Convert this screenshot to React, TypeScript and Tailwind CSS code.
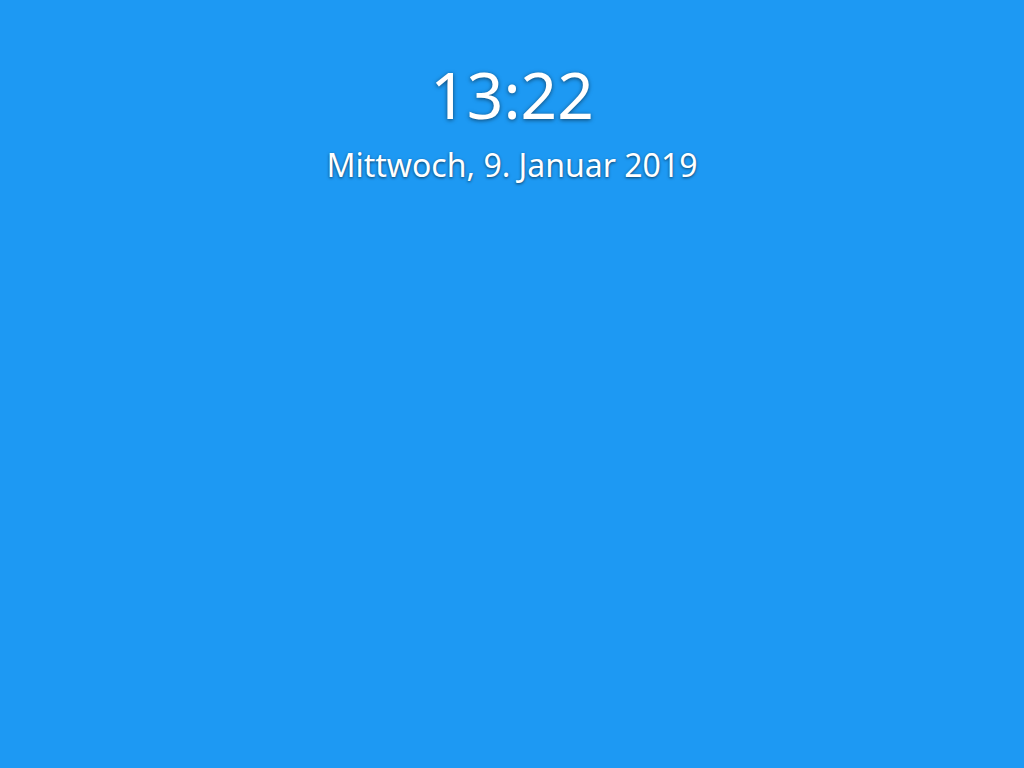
export default function App() {
  return (
    <div className="flex h-[768px] w-[1024px] flex-col items-center bg-[#1d99f3] font-['Noto_Sans','Open_Sans',sans-serif] text-white">
      <div className="mt-[52px] text-[64px] leading-[86px] [text-shadow:0_1px_4px_rgba(0,0,0,0.55)]">
        13:22
      </div>
      <div className="mt-[7px] text-[32px] leading-[40px] [text-shadow:0_1px_3px_rgba(0,0,0,0.6)]">
        Mittwoch, 9. Januar 2019
      </div>
    </div>
  );
}
